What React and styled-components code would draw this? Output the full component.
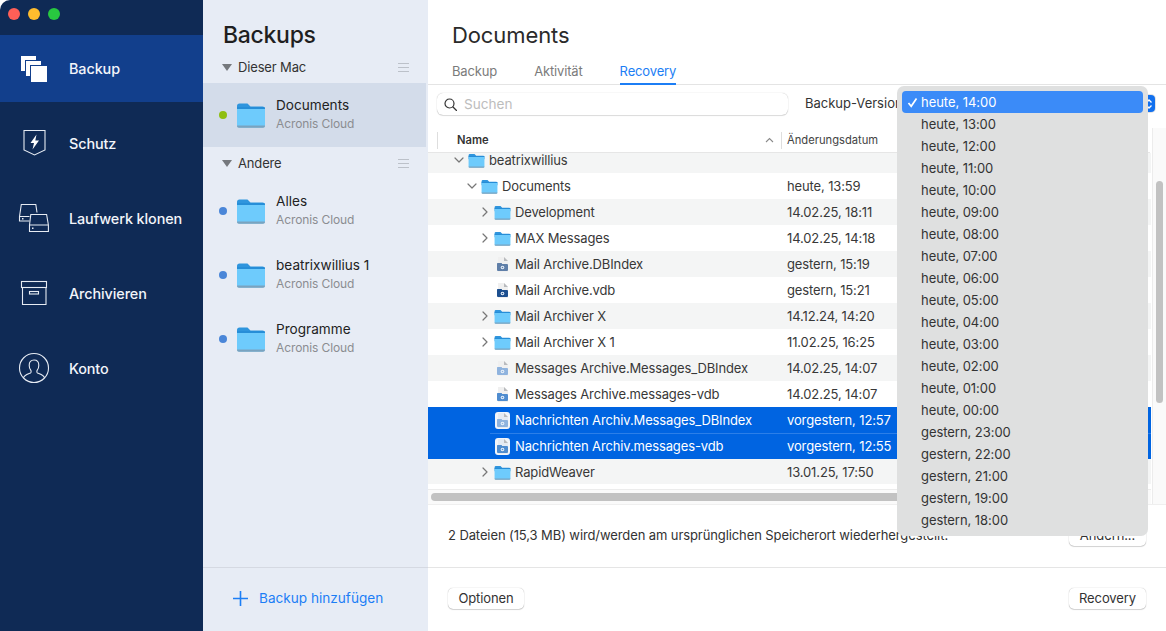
import React from "react";
import styled, { createGlobalStyle } from "styled-components";

const GlobalStyle = createGlobalStyle`
  html, body { margin: 0; padding: 0; background: #fff; }
  body { font-family: "Inter", "Liberation Sans", sans-serif; color: #2b2b2b; overflow: hidden; }
  * { box-sizing: border-box; }
`;

const Window = styled.div`
  width: 1166px;
  height: 631px;
  display: flex;
  position: relative;
  overflow: hidden;
`;

/* left navigation */
const Sidebar = styled.nav`
  width: 203px;
  flex: none;
  background: #0f2a55;
  border-top-left-radius: 10px;
  padding-top: 35px;
  display: flex;
  flex-direction: column;
  gap: 8px;
  position: relative;
`;
const Traffic = styled.div`
  position: absolute;
  top: 8px;
  left: 8px;
  display: flex;
  gap: 8px;
`;
const Light = styled.span`
  width: 12px;
  height: 12px;
  border-radius: 50%;
  background: ${(p) => p.$color};
`;
const NavItem = styled.div`
  height: 67px;
  display: flex;
  align-items: center;
  padding-left: 69px;
  position: relative;
  font-size: 14.4px;
  font-weight: 500;
  letter-spacing: -0.1px;
  color: #f2f5fa;
  background: ${(p) => (p.$active ? "#123f8c" : "transparent")};
  svg {
    position: absolute;
    left: 18px;
    top: 17px;
  }
`;

/* backups list */
const Panel = styled.aside`
  width: 225px;
  flex: none;
  background: #e7ecf5;
  display: flex;
  flex-direction: column;
`;
const PanelTitle = styled.h1`
  margin: 0;
  height: 51px;
  padding: 20px 0 0 20px;
  font-size: 23px;
  line-height: 30px;
  font-weight: 500;
  letter-spacing: -0.3px;
  color: #1f1f1f;
`;
const SectionHead = styled.div`
  height: 32px;
  display: flex;
  align-items: center;
  padding: 0 19px;
  font-size: 13px;
  letter-spacing: -0.15px;
  color: #333;
`;
const Triangle = styled.span`
  width: 0;
  height: 0;
  border-left: 5px solid transparent;
  border-right: 5px solid transparent;
  border-top: 7px solid #75787d;
  margin-right: 6px;
`;
const SectionLabel = styled.span`
  flex: 1;
`;
const Burger = styled.span`
  width: 11px;
  height: 9px;
  border-top: 1px solid #bcc1c9;
  border-bottom: 1px solid #bcc1c9;
  position: relative;
  &::after {
    content: "";
    position: absolute;
    left: 0;
    right: 0;
    top: 3px;
    height: 1px;
    background: #bcc1c9;
  }
`;
const BackupRow = styled.div`
  height: 64px;
  width: 223px;
  display: flex;
  align-items: center;
  padding-left: 16px;
  background: ${(p) => (p.$selected ? "#d3dcea" : "transparent")};
`;
const Dot = styled.span`
  width: 8px;
  height: 8px;
  border-radius: 50%;
  background: ${(p) => p.$color};
  margin-right: 9px;
  flex: none;
`;
const BackupText = styled.div`
  margin-left: 10px;
  padding-bottom: 2px;
  display: flex;
  flex-direction: column;
  gap: 3px;
`;
const BackupName = styled.span`
  font-size: 13.6px;
  line-height: 16px;
  color: #222;
`;
const BackupSub = styled.span`
  font-size: 12px;
  letter-spacing: -0.1px;
  line-height: 16px;
  color: #8b8d91;
`;
const PanelFooter = styled.div`
  margin-top: auto;
  height: 64px;
  border-top: 1px solid #d5d9e2;
  display: flex;
  align-items: center;
  gap: 10px;
  padding: 0 0 3px 29px;
  font-size: 13.6px;
  color: #1c7ef5;
`;

/* main pane */
const Main = styled.main`
  flex: 1;
  min-width: 0;
  display: flex;
  flex-direction: column;
  background: #fff;
`;
const MainHead = styled.header`
  height: 85px;
  padding: 20px 0 0 24px;
  border-bottom: 1px solid #e4e4e4;
`;
const MainTitle = styled.h2`
  margin: 0 0 12px;
  font-size: 22px;
  letter-spacing: -0.1px;
  line-height: 30px;
  font-weight: 400;
  color: #2a2a2a;
`;
const Tabs = styled.div`
  display: flex;
  gap: 37px;
`;
const Tab = styled.span`
  height: 23px;
  line-height: 18px;
  font-size: 13px;
  letter-spacing: -0.15px;
  color: ${(p) => (p.$active ? "#1c7ef5" : "#7b7b7b")};
  border-bottom: 2px solid ${(p) => (p.$active ? "#1c7ef5" : "transparent")};
`;
const Toolbar = styled.div`
  height: 43px;
  display: flex;
  align-items: flex-start;
  padding: 8px 0 0 9px;
  position: relative;
`;
const Search = styled.div`
  width: 351px;
  height: 22px;
  background: #fff;
  border-radius: 6px;
  box-shadow: 0 0 1px rgba(0, 0, 0, 0.3), 0 1px 1px rgba(0, 0, 0, 0.12);
  display: flex;
  align-items: center;
  gap: 7px;
  padding-left: 7px;
  font-size: 13.6px;
  color: #bdbdbd;
`;
const VersionLabel = styled.span`
  margin-left: 17px;
  font-size: 13px;
  line-height: 20px;
  color: #333;
`;
const PopupButton = styled.span`
  position: absolute;
  left: 715px;
  top: 10px;
  width: 12px;
  height: 17px;
  border-radius: 4px;
  background: #1270ee;
  box-shadow: 0 0 0 1px #e3e3e3;
  display: flex;
  align-items: center;
  justify-content: center;
`;
const TableHead = styled.div`
  height: 25px;
  width: 722px;
  display: flex;
  align-items: center;
  font-size: 11.2px;
  color: #444;
  border-bottom: 1px solid #e6e6e6;
`;
const HeadName = styled.div`
  width: 345px;
  height: 17px;
  margin-left: 9px;
  padding-left: 19px;
  padding-right: 7px;
  border-left: 1px solid #dedede;
  border-right: 1px solid #dedede;
  display: flex;
  align-items: center;
  justify-content: space-between;
  font-weight: 600;
  color: #333;
`;
const HeadDate = styled.div`
  padding-left: 5px;
`;
const ListArea = styled.div`
  display: flex;
  height: 352px;
  border-bottom: 1px solid #efefef;
`;
const ListColumn = styled.div`
  width: 723px;
  flex: none;
  display: flex;
  flex-direction: column;
`;
const RowsClip = styled.div`
  height: 332px;
  overflow: hidden;
`;
const Rows = styled.div`
  margin-top: -6px;
`;
const Row = styled.div`
  height: 26px;
  width: 723px;
  position: relative;
  display: flex;
  align-items: center;
  font-size: 13px;
  letter-spacing: -0.13px;
  padding-left: ${(p) => 25 + p.$depth * 13}px;
  background: ${(p) => (p.$selected ? "#0064e1" : p.$striped ? "#f4f5f5" : "#fff")};
  color: ${(p) => (p.$selected ? "#fff" : "#383838")};
  ${(p) =>
    p.$joined &&
    `&::before {
      content: "";
      position: absolute;
      left: 62px;
      right: 0;
      top: 0;
      height: 1px;
      background: #2c7fe8;
    }`}
`;
const Disclosure = styled.span`
  width: 12px;
  height: 12px;
  flex: none;
  margin-right: 3px;
  display: flex;
  align-items: center;
  justify-content: center;
`;
const RowName = styled.span`
  margin-left: 4px;
  white-space: nowrap;
  flex: 1;
`;
const RowDate = styled.span`
  position: absolute;
  left: 359px;
  white-space: nowrap;
`;
const HScroll = styled.div`
  height: 20px;
  padding-top: 5px;
`;
const HTrack = styled.div`
  height: 15px;
  background: #fafafa;
  border-top: 1px solid #ececec;
  padding: 3px;
`;
const HThumb = styled.div`
  height: 8px;
  width: 500px;
  border-radius: 4px;
  background: #c2c2c2;
`;
const VScroll = styled.div`
  width: 14px;
  margin-left: 1px;
  margin-top: -25px;
  background: #fafafa;
  border-left: 1px solid #ececec;
  padding: 53px 3px 0;
`;
const VThumb = styled.div`
  height: 222px;
  border-radius: 4px;
  background: #c2c2c2;
`;
const InfoBar = styled.div`
  height: 63px;
  display: flex;
  align-items: center;
  justify-content: space-between;
  padding: 0 20px 2px;
  font-size: 13px;
  letter-spacing: -0.1px;
  color: #333;
  border-bottom: 1px solid #e5e5e5;
`;
const ActionBar = styled.div`
  flex: 1;
  display: flex;
  align-items: center;
  justify-content: space-between;
  padding: 0 20px 3px;
`;
const Button = styled.button`
  height: 21px;
  width: ${(p) => p.$width}px;
  padding: 0;
  border: none;
  border-radius: 5px;
  background: #fff;
  font: inherit;
  font-size: 13px;
  letter-spacing: -0.1px;
  color: #333;
  box-shadow: 0 0 1px rgba(0, 0, 0, 0.35), 0 1px 1px rgba(0, 0, 0, 0.15);
`;

/* version dropdown */
const Dropdown = styled.div`
  position: absolute;
  left: 897px;
  top: 86px;
  width: 251px;
  height: 450px;
  padding: 5px;
  border-radius: 7px;
  background: #dfe0e0;
  font-size: 13px;
  letter-spacing: -0.05px;
  color: #333;
`;
const Option = styled.div`
  height: 22px;
  line-height: 23px;
  padding-left: 19px;
  position: relative;
  border-radius: 4px;
  background: ${(p) => (p.$selected ? "#3b8bf8" : "transparent")};
  color: ${(p) => (p.$selected ? "#fff" : "#333")};
`;
const Check = styled.svg`
  position: absolute;
  left: 5px;
  top: 6px;
`;

const FolderIcon = ({ w = 17, h = 15 }) => (
  <svg width={w} height={h} viewBox="0 0 30 26" style={{ flex: "none" }}>
    <path d="M1 4a2.500 2.500 0 0 1 2.500-2.500h8l3 3H26.500A2.500 2.500 0 0 1 29 7v4H1z" fill="#2f95dd" />
    <path d="M1 6.500h28V23a2.500 2.500 0 0 1-2.500 2.500h-23A2.500 2.500 0 0 1 1 23z" fill="#6ecbfc" />
    <path d="M1 5.500h28v1.300H1z" fill="#1f86d2" />
    <path d="M1 23.500h28v.5a1.800 1.800 0 0 1-1.800 1.800H2.800A1.800 1.800 0 0 1 1 24z" fill="#7aa3bf" />
  </svg>
);

const FileIcon = ({ tint, selected }) => (
  <svg width="17" height="17" viewBox="0 0 17 17" style={{ flex: "none" }}>
    {selected && <rect x="1" y="0" width="15" height="17" rx="3" fill="#f2f5fa" />}
    <path d="M4 1h6l4 4v11H4z" fill={selected ? "#e6ebf3" : "#f0f0f0"} />
    <path d="M10 1l4 4h-4z" fill="#b9bbbe" />
    <rect x="3" y="8" width="11" height="7" rx="1" fill={tint} />
    <rect x="3" y="7" width="5" height="2" rx="0.500" fill={tint} />
    <circle cx="8.500" cy="11.500" r="1.800" fill="#eaf1fa" />
    <circle cx="8.500" cy="11.500" r="0.800" fill={tint} />
  </svg>
);

const Chevron = ({ open }) => (
  <svg width="10" height="10" viewBox="0 0 10 10">
    <path
      d={open ? "M1 3l4 4 4-4" : "M3 1l4 4-4 4"}
      fill="none"
      stroke="#777"
      strokeWidth="1.200"
      strokeLinecap="round"
      strokeLinejoin="round"
    />
  </svg>
);

const BackupIcon = () => (
  <svg width="32" height="32" viewBox="0 0 32 32">
    <rect x="2.500" y="3.500" width="16" height="16" fill="#fff" stroke="#123f8c" />
    <rect x="7.500" y="8.500" width="16" height="16" fill="#fff" stroke="#123f8c" />
    <rect x="12.500" y="13.500" width="17" height="17" fill="#fff" stroke="#123f8c" />
  </svg>
);
const ShieldIcon = () => (
  <svg width="32" height="32" viewBox="0 0 32 32" fill="none">
    <path d="M6 3.500h21v19.500l-10.500 5L6 23z" stroke="#e6ebf3" strokeWidth="1.100" />
    <path d="M18.500 7.500l-6 8.500h3.500l-1.500 6.500 6.500-9h-3.700z" fill="#fff" />
  </svg>
);
const DisksIcon = () => (
  <svg width="32" height="32" viewBox="0 0 32 32" fill="none" stroke="#e6ebf3" strokeWidth="1.100">
    <path d="M1.500 14.500l1.800-12h14.500l1.200 8M1.500 14.500v4.500h10M1.500 14.500h10" />
    <path d="M11.500 23l1.300-10.500h15.800l1.800 10.500v6.500H11.500zM11.500 23h19" />
    <rect x="4" y="16" width="1.500" height="1.500" fill="#e6ebf3" stroke="none" />
    <rect x="14" y="25.500" width="1.500" height="1.500" fill="#e6ebf3" stroke="none" />
  </svg>
);
const ArchiveIcon = () => (
  <svg width="32" height="32" viewBox="0 0 32 32" fill="none" stroke="#e6ebf3" strokeWidth="1.100">
    <rect x="3.500" y="4.500" width="25" height="6" />
    <path d="M4.500 10.500v17h23.500v-17" />
    <rect x="11.500" y="14.500" width="9" height="2.500" />
  </svg>
);
const UserIcon = () => (
  <svg width="32" height="32" viewBox="0 0 32 32" fill="none" stroke="#e6ebf3" strokeWidth="1.100">
    <circle cx="16" cy="16" r="14.500" />
    <path d="M5.500 26c.5-3 4-3.800 7-5 .8-.4.8-2 .2-2.800-1-1.200-1.500-3-1.500-5 0-3.200 1.800-5.200 4.800-5.200s4.800 2 4.800 5.200c0 2-.5 3.800-1.500 5-.6.8-.6 2.400.2 2.800 3 1.200 6.500 2 7 5" />
  </svg>
);

const navItems = [
  { label: "Backup", icon: <BackupIcon />, active: true },
  { label: "Schutz", icon: <ShieldIcon /> },
  { label: "Laufwerk klonen", icon: <DisksIcon /> },
  { label: "Archivieren", icon: <ArchiveIcon /> },
  { label: "Konto", icon: <UserIcon /> },
];

const fileRows = [
  { name: "beatrixwillius", depth: 0, type: "open", date: "" },
  { name: "Documents", depth: 1, type: "open", date: "heute, 13:59" },
  { name: "Development", depth: 2, type: "closed", date: "14.02.25, 18:11" },
  { name: "MAX Messages", depth: 2, type: "closed", date: "14.02.25, 14:18" },
  { name: "Mail Archive.DBIndex", depth: 2, tint: "#5f7fa8", date: "gestern, 15:19" },
  { name: "Mail Archive.vdb", depth: 2, tint: "#1d4f8f", date: "gestern, 15:21" },
  { name: "Mail Archiver X", depth: 2, type: "closed", date: "14.12.24, 14:20" },
  { name: "Mail Archiver X 1", depth: 2, type: "closed", date: "11.02.25, 16:25" },
  { name: "Messages Archive.Messages_DBIndex", depth: 2, tint: "#8fb3de", date: "14.02.25, 14:07" },
  { name: "Messages Archive.messages-vdb", depth: 2, tint: "#4f8ccf", date: "14.02.25, 14:07" },
  { name: "Nachrichten Archiv.Messages_DBIndex", depth: 2, tint: "#8fb3de", date: "vorgestern, 12:57", selected: true },
  { name: "Nachrichten Archiv.messages-vdb", depth: 2, tint: "#4f8ccf", date: "vorgestern, 12:55", selected: true, joined: true },
  { name: "RapidWeaver", depth: 2, type: "closed", date: "13.01.25, 17:50" },
];

const versions = [
  "heute, 14:00", "heute, 13:00", "heute, 12:00", "heute, 11:00", "heute, 10:00",
  "heute, 09:00", "heute, 08:00", "heute, 07:00", "heute, 06:00", "heute, 05:00",
  "heute, 04:00", "heute, 03:00", "heute, 02:00", "heute, 01:00", "heute, 00:00",
  "gestern, 23:00", "gestern, 22:00", "gestern, 21:00", "gestern, 19:00", "gestern, 18:00",
];

const BackupEntry = ({ name, color, selected }) => (
  <BackupRow $selected={selected}>
    <Dot $color={color} />
    <FolderIcon w={30} h={26} />
    <BackupText>
      <BackupName>{name}</BackupName>
      <BackupSub>Acronis Cloud</BackupSub>
    </BackupText>
  </BackupRow>
);

export default function App() {
  return (
    <Window>
      <GlobalStyle />
      <Sidebar>
        <Traffic>
          <Light $color="#ff5f57" />
          <Light $color="#febc2e" />
          <Light $color="#28c840" />
        </Traffic>
        {navItems.map((item) => (
          <NavItem key={item.label} $active={item.active}>
            {item.icon}
            {item.label}
          </NavItem>
        ))}
      </Sidebar>

      <Panel>
        <PanelTitle>Backups</PanelTitle>
        <SectionHead>
          <Triangle />
          <SectionLabel>Dieser Mac</SectionLabel>
          <Burger />
        </SectionHead>
        <BackupEntry name="Documents" color="#8fbf12" selected />
        <SectionHead>
          <Triangle />
          <SectionLabel>Andere</SectionLabel>
          <Burger />
        </SectionHead>
        <BackupEntry name="Alles" color="#4a86d8" />
        <BackupEntry name="beatrixwillius 1" color="#4a86d8" />
        <BackupEntry name="Programme" color="#4a86d8" />
        <PanelFooter>
          <svg width="17" height="17" viewBox="0 0 17 17">
            <path d="M8.500 1v15M1 8.500h15" stroke="#1c7ef5" strokeWidth="1.600" />
          </svg>
          Backup hinzufügen
        </PanelFooter>
      </Panel>

      <Main>
        <MainHead>
          <MainTitle>Documents</MainTitle>
          <Tabs>
            <Tab>Backup</Tab>
            <Tab>Aktivität</Tab>
            <Tab $active>Recovery</Tab>
          </Tabs>
        </MainHead>
        <Toolbar>
          <Search>
            <svg width="13" height="13" viewBox="0 0 13 13" fill="none" stroke="#333" strokeWidth="1.200">
              <circle cx="5.500" cy="5.500" r="4.500" />
              <path d="M9 9l3.500 3.500" strokeLinecap="round" />
            </svg>
            Suchen
          </Search>
          <VersionLabel>Backup-Version:</VersionLabel>
          <PopupButton>
            <svg width="8" height="12" viewBox="0 0 8 12" fill="none" stroke="#fff" strokeWidth="1.300">
              <path d="M1.500 4.500L4 2l2.500 2.500M1.500 7.500L4 10l2.500-2.500" />
            </svg>
          </PopupButton>
        </Toolbar>
        <TableHead>
          <HeadName>
            Name
            <svg width="9" height="6" viewBox="0 0 9 6" fill="none" stroke="#8a8a8a" strokeWidth="1.100">
              <path d="M1 5l3.500-3.500L8 5" />
            </svg>
          </HeadName>
          <HeadDate>Änderungsdatum</HeadDate>
        </TableHead>
        <ListArea>
          <ListColumn>
            <RowsClip>
              <Rows>
                {fileRows.map((row, i) => (
                  <Row
                    key={row.name}
                    $depth={row.depth}
                    $striped={i % 2 === 0}
                    $selected={row.selected}
                    $joined={row.joined}
                  >
                    <Disclosure>
                      {row.type === "open" && <Chevron open />}
                      {row.type === "closed" && <Chevron />}
                    </Disclosure>
                    {row.type ? <FolderIcon /> : <FileIcon tint={row.tint} selected={row.selected} />}
                    <RowName>{row.name}</RowName>
                    <RowDate>{row.date}</RowDate>
                  </Row>
                ))}
              </Rows>
            </RowsClip>
            <HScroll>
              <HTrack>
                <HThumb />
              </HTrack>
            </HScroll>
          </ListColumn>
          <VScroll>
            <VThumb />
          </VScroll>
        </ListArea>
        <InfoBar>
          <span>2 Dateien (15,3 MB) wird/werden am ursprünglichen Speicherort wiederhergestellt.</span>
          <Button $width={77}>Ändern...</Button>
        </InfoBar>
        <ActionBar>
          <Button $width={76}>Optionen</Button>
          <Button $width={77}>Recovery</Button>
        </ActionBar>
      </Main>

      <Dropdown>
        {versions.map((v, i) => (
          <Option key={v} $selected={i === 0}>
            {i === 0 && (
              <Check width="11" height="11" viewBox="0 0 11 11" fill="none" stroke="#fff" strokeWidth="1.700">
                <path d="M1.500 6l2.700 3.300L9.500 1.500" />
              </Check>
            )}
            {v}
          </Option>
        ))}
      </Dropdown>
    </Window>
  );
}
